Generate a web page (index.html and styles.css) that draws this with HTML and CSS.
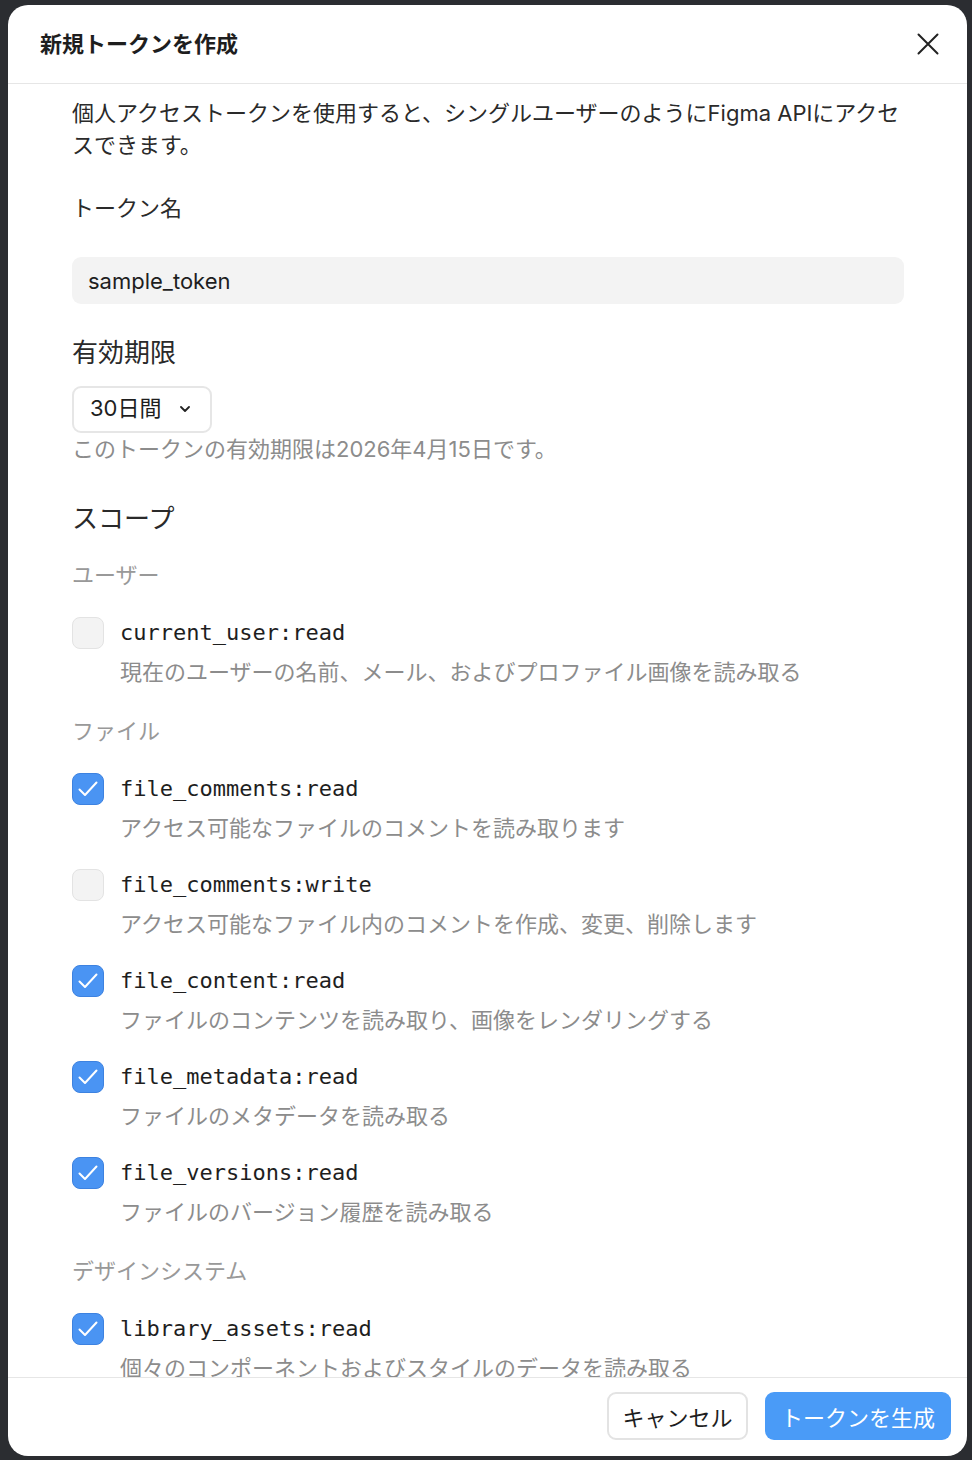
FILE: index.html
```html
<!DOCTYPE html>
<html lang="ja">
<head>
<meta charset="utf-8">
<title>新規トークンを作成</title>
<link rel="stylesheet" href="styles.css">
</head>
<body>
<div class="modal">
  <header class="modal-header">
    <h1 class="modal-title">新規トークンを作成</h1>
    <button class="close-btn" aria-label="閉じる">
      <svg width="22" height="22" viewBox="0 0 22 22"><path d="M1.5 1.5 L20.5 20.5 M20.5 1.5 L1.5 20.5" stroke="#222" stroke-width="2" fill="none" stroke-linecap="round"/></svg>
    </button>
  </header>
  <div class="modal-body">
    <p class="intro">個人アクセストークンを使用すると、シングルユーザーのようにFigma APIにアクセスできます。</p>
    <div class="field-label">トークン名</div>
    <div class="text-input">sample_token</div>
    <h2 class="section-title first">有効期限</h2>
    <div class="select">
      <span>30日間</span>
      <svg class="chev" width="10" height="6" viewBox="0 0 10 6"><path d="M1 1 L5 5 L9 1" stroke="#222" stroke-width="1.8" fill="none" stroke-linecap="round" stroke-linejoin="round"/></svg>
    </div>
    <p class="help">このトークンの有効期限は2026年4月15日です。</p>
    <h2 class="section-title scopes">スコープ</h2>

    <div class="group-label first-group">ユーザー</div>
    <div class="scope">
      <span class="checkbox"></span>
      <div class="scope-text">
        <div class="scope-name">current_user:read</div>
        <div class="scope-desc">現在のユーザーの名前、メール、およびプロファイル画像を読み取る</div>
      </div>
    </div>

    <div class="group-label">ファイル</div>
    <div class="scope">
      <span class="checkbox checked"><svg width="22" height="18" viewBox="0 0 22 18"><path d="M2.5 9.5 L8 15 L19.5 2.5" stroke="#fff" stroke-width="2" fill="none" stroke-linecap="round" stroke-linejoin="round"/></svg></span>
      <div class="scope-text">
        <div class="scope-name">file_comments:read</div>
        <div class="scope-desc">アクセス可能なファイルのコメントを読み取ります</div>
      </div>
    </div>
    <div class="scope">
      <span class="checkbox"></span>
      <div class="scope-text">
        <div class="scope-name">file_comments:write</div>
        <div class="scope-desc">アクセス可能なファイル内のコメントを作成、変更、削除します</div>
      </div>
    </div>
    <div class="scope">
      <span class="checkbox checked"><svg width="22" height="18" viewBox="0 0 22 18"><path d="M2.5 9.5 L8 15 L19.5 2.5" stroke="#fff" stroke-width="2" fill="none" stroke-linecap="round" stroke-linejoin="round"/></svg></span>
      <div class="scope-text">
        <div class="scope-name">file_content:read</div>
        <div class="scope-desc">ファイルのコンテンツを読み取り、画像をレンダリングする</div>
      </div>
    </div>
    <div class="scope">
      <span class="checkbox checked"><svg width="22" height="18" viewBox="0 0 22 18"><path d="M2.5 9.5 L8 15 L19.5 2.5" stroke="#fff" stroke-width="2" fill="none" stroke-linecap="round" stroke-linejoin="round"/></svg></span>
      <div class="scope-text">
        <div class="scope-name">file_metadata:read</div>
        <div class="scope-desc">ファイルのメタデータを読み取る</div>
      </div>
    </div>
    <div class="scope">
      <span class="checkbox checked"><svg width="22" height="18" viewBox="0 0 22 18"><path d="M2.5 9.5 L8 15 L19.5 2.5" stroke="#fff" stroke-width="2" fill="none" stroke-linecap="round" stroke-linejoin="round"/></svg></span>
      <div class="scope-text">
        <div class="scope-name">file_versions:read</div>
        <div class="scope-desc">ファイルのバージョン履歴を読み取る</div>
      </div>
    </div>

    <div class="group-label">デザインシステム</div>
    <div class="scope">
      <span class="checkbox checked"><svg width="22" height="18" viewBox="0 0 22 18"><path d="M2.5 9.5 L8 15 L19.5 2.5" stroke="#fff" stroke-width="2" fill="none" stroke-linecap="round" stroke-linejoin="round"/></svg></span>
      <div class="scope-text">
        <div class="scope-name">library_assets:read</div>
        <div class="scope-desc">個々のコンポーネントおよびスタイルのデータを読み取る</div>
      </div>
    </div>
  </div>
  <footer class="modal-footer">
    <button class="btn btn-secondary">キャンセル</button>
    <button class="btn btn-primary">トークンを生成</button>
  </footer>
</div>
</body>
</html>
```

FILE: styles.css
```css
* { box-sizing: border-box; }
html, body { margin: 0; padding: 0; }
body {
  background: #2b2d31;
  width: 972px;
  height: 1460px;
  overflow: hidden;
  font-family: "Inter", "Noto Sans CJK JP", sans-serif;
  color: #2a2a2a;
  padding: 5px 5px 4px 8px;
}
.modal {
  background: #fff;
  width: 959px;
  height: 1451px;
  border-radius: 20px;
  display: flex;
  flex-direction: column;
  overflow: hidden;
}
.modal-header {
  height: 79px;
  flex: none;
  border-bottom: 1px solid #e6e6e6;
  display: flex;
  align-items: center;
  justify-content: space-between;
  padding: 0 28px 0 32px;
}
.modal-title {
  margin: 0;
  font-size: 22px;
  font-weight: 600;
  color: #1e1e1e;
  line-height: 32px;
}
.close-btn {
  border: 0;
  background: none;
  padding: 0;
  width: 22px;
  height: 22px;
  display: flex;
}
.modal-body {
  flex: 1;
  overflow: hidden;
  padding: 13px 63px 0 64px;
  font-size: 22px;
  line-height: 32px;
}
.intro { margin: 0; color: #2a2a2a; }
.field-label { margin-top: 31px; color: #2a2a2a; }
.text-input {
  margin-top: 33px;
  height: 47px;
  background: #f3f3f3;
  border-radius: 9px;
  padding: 0 16px;
  display: flex;
  align-items: center;
  color: #1e1e1e;
}
.section-title {
  margin: 0;
  font-size: 26px;
  font-weight: 400;
  line-height: 36px;
  color: #2a2a2a;
}
.section-title.first { margin-top: 31px; }
.select {
  margin-top: 15px;
  width: 140px;
  height: 47px;
  border: 2px solid #e6e6e6;
  border-radius: 9px;
  display: flex;
  align-items: center;
  padding: 0 0 3px 16px;
  color: #1e1e1e;
}
.select .chev { margin-left: 19px; margin-top: 2px; }
.help { margin: 0; color: #8c8c8c; }
.section-title.scopes { margin-top: 36px; }
.group-label { margin-top: 27px; color: #999; }
.group-label.first-group { margin-top: 22px; }
.scope {
  margin-top: 26px;
  display: flex;
  gap: 16px;
}
.group-label + .scope { margin-top: 26px; }
.scope + .scope { margin-top: 25px; }
.checkbox {
  flex: none;
  width: 32px;
  height: 32px;
  border-radius: 8px;
  background: #f3f3f3;
  border: 1.5px solid #e3e3e3;
  display: flex;
  align-items: center;
  justify-content: center;
}
.checkbox.checked {
  background: #4a94f3;
  border-color: #3d82e0;
}
.scope-name {
  font-family: "DejaVu Sans Mono", "Liberation Mono", monospace;
  font-size: 22px;
  line-height: 32px;
  color: #1e1e1e;
}
.scope-desc {
  margin-top: 7px;
  color: #8c8c8c;
  white-space: nowrap;
}
.modal-footer {
  flex: none;
  height: 79px;
  border-top: 1px solid #e6e6e6;
  display: flex;
  justify-content: flex-end;
  align-items: flex-start;
  gap: 17px;
  padding: 14px 16px 0 0;
}
.btn {
  font-family: "Inter", "Noto Sans CJK JP", sans-serif;
  font-size: 22px;
  height: 48px;
  border-radius: 9px;
  padding: 0;
}
.btn-secondary {
  width: 141px;
  background: #fff;
  border: 2px solid #e3e3e3;
  color: #1e1e1e;
}
.btn-primary {
  width: 186px;
  background: #4a9bf7;
  border: 0;
  color: #fff;
}
```
